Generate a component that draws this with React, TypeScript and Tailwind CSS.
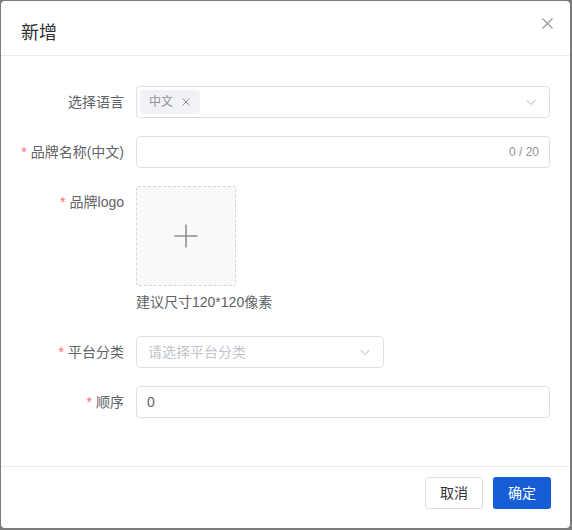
import React from "react";

const font = { fontFamily: '"Liberation Sans", "Noto Sans CJK SC", sans-serif' };

function Chevron() {
  return (
    <svg width="12" height="12" viewBox="0 0 12 12" fill="none">
      <path d="M1.5 4 L6 8.5 L10.5 4" stroke="#b4b8bf" strokeWidth="1" />
    </svg>
  );
}

function Label({ text, required }: { text: string; required?: boolean }) {
  return (
    <div className="w-[115px] shrink-0 pr-[12px] h-[32px] flex items-center justify-end text-[14px] text-[#606266]">
      {required && <span className="text-[#f56c6c] mr-[4px]">*</span>}
      <span>{text}</span>
    </div>
  );
}

export default function App() {
  return (
    <div className="w-[572px] h-[530px] bg-[#7b7b7b] pt-[1px] pl-[1px]" style={font}>
      <div className="w-[569px] h-[527px] bg-white rounded-[4px] flex flex-col">
        {/* header */}
        <div className="relative h-[55px] px-[20px] pt-[20px] pb-[10px] border-b border-[#e8eaee]">
          <div className="text-[18px] leading-[24px] text-[#303133]">新增</div>
          <button className="absolute right-[17px] top-[16px] w-[12px] h-[12px] flex items-center justify-center">
            <svg width="11" height="11" viewBox="0 0 11 11">
              <path d="M0.5 0.5 L10.5 10.5 M10.5 0.5 L0.5 10.5" stroke="#909399" strokeWidth="1.1" />
            </svg>
          </button>
        </div>
        {/* body */}
        <div className="px-[20px] pt-[30px] pb-[48px] flex flex-col gap-[18px]">
          <div className="flex">
            <Label text="选择语言" />
            <div className="flex-1 h-[32px] border border-[#dcdfe6] rounded-[4px] flex items-center pl-[3px] pr-[12px]">
              <div className="h-[24px] bg-[#f0f2f5] rounded-[4px] flex items-center pl-[9px] pr-[9px] text-[12px] text-[#909399]">
                <span>中文</span>
                <svg className="ml-[8px]" width="10" height="10" viewBox="0 0 10 10">
                  <path d="M1.5 1.5 L8.5 8.5 M8.5 1.5 L1.5 8.5" stroke="#909399" strokeWidth="1" />
                </svg>
              </div>
              <div className="flex-1" />
              <Chevron />
            </div>
          </div>
          <div className="flex">
            <Label text="品牌名称(中文)" required />
            <div className="flex-1 h-[32px] border border-[#dcdfe6] rounded-[4px] flex items-center justify-end pr-[10px] text-[12px] text-[#909399]">
              0 / 20
            </div>
          </div>
          <div className="flex">
            <Label text="品牌logo" required />
            <div className="flex flex-col">
              <div className="w-[100px] h-[100px] border border-dashed border-[#d3d6dc] bg-[#f9f9fa] rounded-[2px] flex items-center justify-center">
                <svg width="26" height="26" viewBox="0 0 26 26">
                  <path d="M13 1.5 V24.5 M1.5 13 H24.5" stroke="#8c8f96" strokeWidth="1.6" />
                </svg>
              </div>
              <div className="h-[32px] leading-[32px] text-[14px] text-[#606266]">建议尺寸120*120像素</div>
            </div>
          </div>
          <div className="flex">
            <Label text="平台分类" required />
            <div className="w-[248px] h-[32px] border border-[#dcdfe6] rounded-[4px] flex items-center pl-[11px] pr-[12px] text-[14px] text-[#c0c4cc]">
              <span className="flex-1">请选择平台分类</span>
              <Chevron />
            </div>
          </div>
          <div className="flex">
            <Label text="顺序" required />
            <div className="flex-1 h-[32px] border border-[#dcdfe6] rounded-[4px] flex items-center pl-[10px] text-[14px] text-[#606266]">
              0
            </div>
          </div>
        </div>
        {/* footer */}
        <div className="border-t border-[#e8eaee] pt-[10px] pr-[19px] flex justify-end gap-[10px]">
          <button className="w-[58px] h-[32px] border border-[#dcdfe6] rounded-[3px] bg-white text-[14px] text-[#303133]">取消</button>
          <button className="w-[58px] h-[32px] rounded-[3px] bg-[#175ed6] text-[14px] text-white">确定</button>
        </div>
      </div>
    </div>
  );
}
